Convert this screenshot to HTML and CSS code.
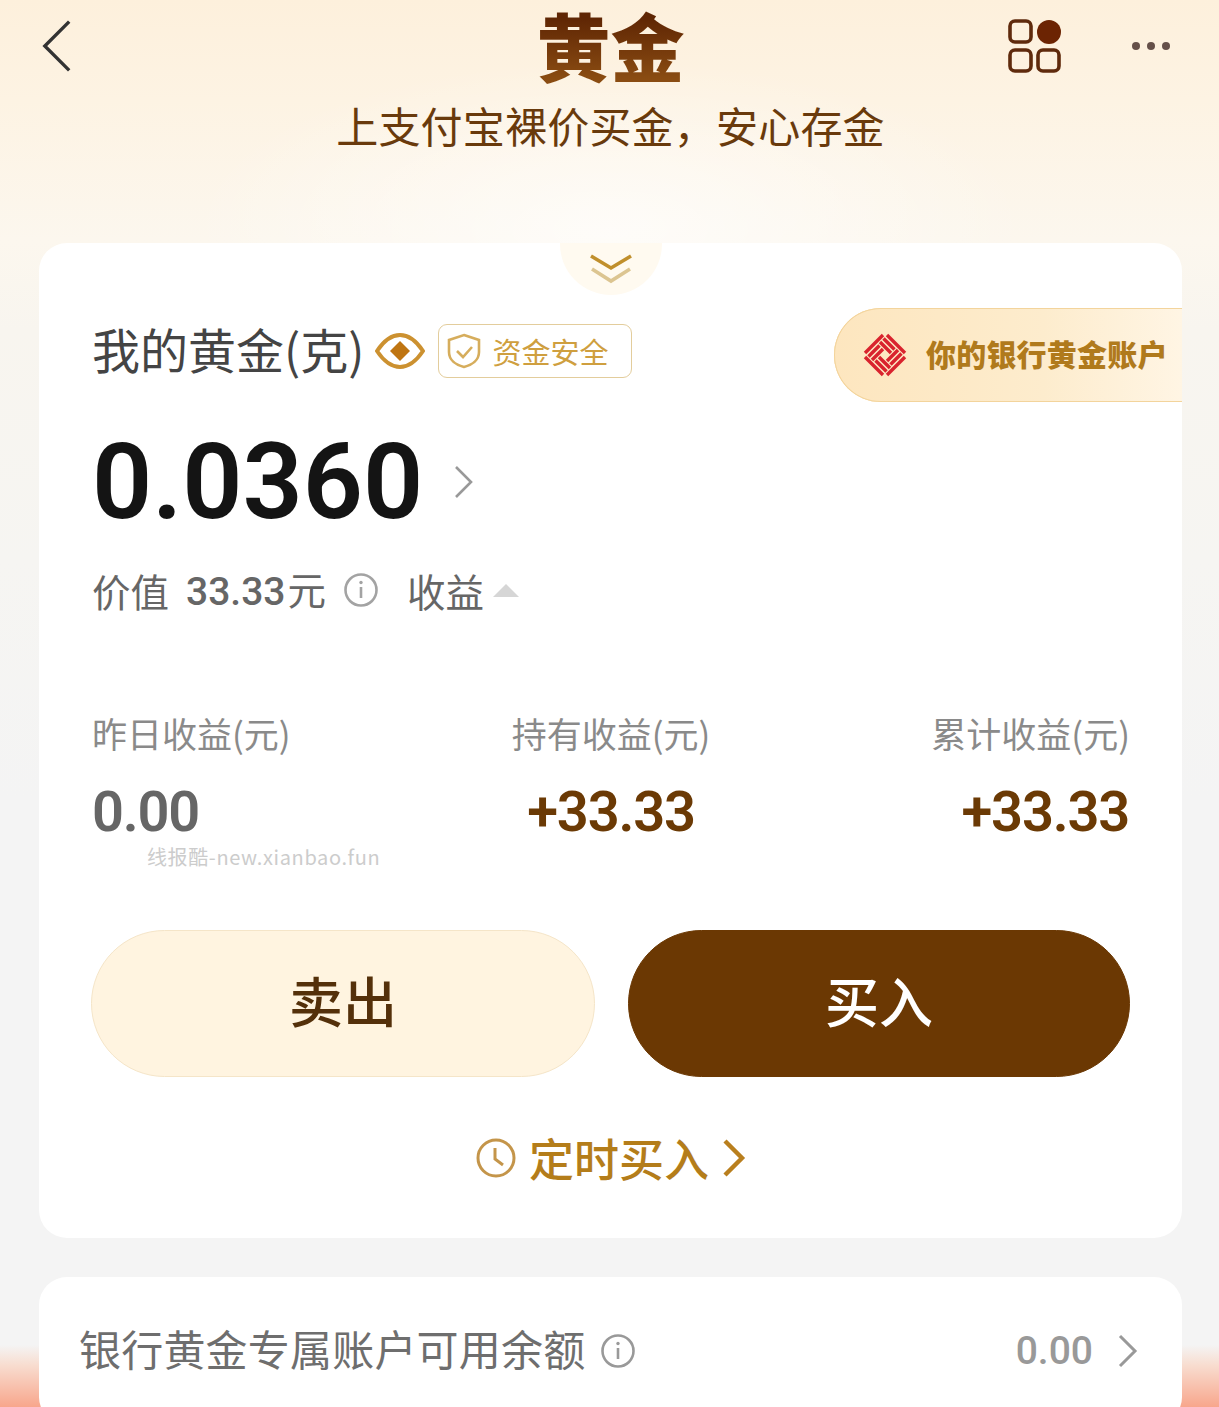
FILE: index.html
```html
<!DOCTYPE html>
<html lang="zh-CN">
<head>
  <meta charset="utf-8">
  <title>黄金</title>
  <link rel="stylesheet" href="styles.css">
</head>
<body>
  <div class="page">
    <header class="top">
      <div class="nav">
        <svg class="back" viewBox="0 0 32 56" width="30" height="54"><path d="M29 2 3 28l26 26" fill="none" stroke="#333" stroke-width="3.6"/></svg>
        <h1 class="title">黄金</h1>
        <div class="nav-right">
          <svg class="apps" viewBox="0 0 54 54" width="54" height="54">
            <rect x="2" y="2" width="21" height="21" rx="5" fill="none" stroke="#5f2a0c" stroke-width="3.6"/>
            <circle cx="41" cy="13" r="12" fill="#6c2403"/>
            <rect x="2" y="31" width="21" height="21" rx="5" fill="none" stroke="#5f2a0c" stroke-width="3.6"/>
            <rect x="30" y="31" width="21" height="21" rx="5" fill="none" stroke="#5f2a0c" stroke-width="3.6"/>
          </svg>
          <div class="more"><i></i><i></i><i></i></div>
        </div>
      </div>
      <p class="slogan">上支付宝裸价买金，安心存金</p>
    </header>

    <section class="card main">
      <div class="pull">
        <svg viewBox="0 0 44 32" width="44" height="32">
          <path d="M2 3 22 15 42 3" fill="none" stroke="#c08f2c" stroke-width="3.6"/>
          <path d="M3 16 22 28 41 16" fill="none" stroke="#dcc591" stroke-width="3.6"/>
        </svg>
      </div>
      <div class="bank">
        <svg viewBox="0 0 44 44" width="44" height="44">
          <g fill="none" stroke="#d9232e" stroke-width="3.4">
            <path d="M2 20 20 2M5.5 23.5l11-11M9 27l11-11"/>
            <path transform="rotate(90 22 22)" d="M2 20 20 2M5.5 23.5l11-11M9 27l11-11"/>
            <path transform="rotate(180 22 22)" d="M2 20 20 2M5.5 23.5l11-11M9 27l11-11"/>
            <path transform="rotate(270 22 22)" d="M2 20 20 2M5.5 23.5l11-11M9 27l11-11"/>
          </g>
        </svg>
        <span>你的银行黄金账户</span>
      </div>

      <div class="holding">
        <span class="holding-label">我的黄金(克)</span>
        <svg class="eye" viewBox="0 0 50 38" width="50" height="38">
          <path d="M2 19C10 7 17 3 25 3s15 4 23 16c-8 12-15 16-23 16S10 31 2 19Z" fill="none" stroke="#cc9130" stroke-width="4"/>
          <path d="M25 9 35 19 25 29 15 19Z" fill="#bf7512"/>
        </svg>
        <span class="safe">
          <svg viewBox="0 0 34 36" width="34" height="36">
            <path d="M17 2 32 7v12c0 8-7 13-15 15C9 32 2 27 2 19V7Z" fill="none" stroke="#d6ad5c" stroke-width="2.6"/>
            <path d="M10 18l6 6 9-10" fill="none" stroke="#d6ad5c" stroke-width="2.6"/>
          </svg>
          资金安全
        </span>
      </div>

      <div class="amount">
        <span>0.0360</span>
        <svg viewBox="0 0 20 34" width="20" height="34"><path d="M2 2 17 17 2 32" fill="none" stroke="#999" stroke-width="2.6"/></svg>
      </div>

      <div class="worth">
        <span>价值</span>
        <span class="worth-num"><b>33.33</b>元</span>
        <svg class="info" viewBox="0 0 34 34" width="34" height="34">
          <circle cx="17" cy="17" r="15.5" fill="none" stroke="#a3a3a3" stroke-width="2.6"/>
          <path d="M17 14v11" stroke="#a3a3a3" stroke-width="2.6"/>
          <circle cx="17" cy="9.5" r="1.7" fill="#a3a3a3"/>
        </svg>
        <span class="earn">收益</span>
        <i class="tri"></i>
      </div>

      <div class="stats">
        <div class="stat">
          <span class="stat-label">昨日收益(元)</span>
          <b class="stat-num grey">0.00</b>
          <span class="mark">线报酷-new.xianbao.fun</span>
        </div>
        <div class="stat mid">
          <span class="stat-label">持有收益(元)</span>
          <b class="stat-num">+33.33</b>
        </div>
        <div class="stat end">
          <span class="stat-label">累计收益(元)</span>
          <b class="stat-num">+33.33</b>
        </div>
      </div>

      <div class="actions">
        <button class="btn sell">卖出</button>
        <button class="btn buy">买入</button>
      </div>

      <div class="plan">
        <svg viewBox="0 0 40 40" width="40" height="40">
          <circle cx="20" cy="20" r="18" fill="none" stroke="#c4954a" stroke-width="3"/>
          <path d="M19 10v11l8 6" fill="none" stroke="#c4954a" stroke-width="3"/>
        </svg>
        <span>定时买入</span>
        <svg viewBox="0 0 24 38" width="24" height="38"><path d="M3 2 20 19 3 36" fill="none" stroke="#b97f1e" stroke-width="4.4"/></svg>
      </div>
    </section>

    <section class="card balance">
      <div class="balance-left">
        <span>银行黄金专属账户可用余额</span>
        <svg class="info" viewBox="0 0 34 34" width="34" height="34">
          <circle cx="17" cy="17" r="15.5" fill="none" stroke="#999" stroke-width="2.6"/>
          <path d="M17 14v11" stroke="#999" stroke-width="2.6"/>
          <circle cx="17" cy="9.5" r="1.7" fill="#999"/>
        </svg>
      </div>
      <div class="balance-right">
        <b>0.00</b>
        <svg viewBox="0 0 20 34" width="20" height="34"><path d="M2 2 17 17 2 32" fill="none" stroke="#999" stroke-width="3"/></svg>
      </div>
    </section>
  </div>
</body>
</html>
```

FILE: styles.css
```css
* {
  box-sizing: border-box;
}

html, body {
  margin: 0;
  height: 100%;
  overflow: hidden;
}

body {
  font-family: "Noto Sans CJK SC", "Noto Sans", sans-serif;
}

.page {
  height: 1407px;
  padding: 0 37px 0 39px;
  overflow: hidden;
  background:
    radial-gradient(ellipse 420px 170px at 610px 230px, rgba(255, 255, 255, .65), rgba(255, 255, 255, 0)),
    linear-gradient(180deg, #fdf0dc 0, #fdf3e3 100px, #fcf7ee 240px, #f8f5ef 330px, #f6f5f2 560px, #f4f4f4 800px, #f4f4f4 1345px, #f8ddd0 1365px, #f8a68c 1407px);
}

/* top */
.top {
  height: 243px;
}

.nav {
  position: relative;
  display: flex;
  justify-content: center;
  height: 92px;
}

.back {
  position: absolute;
  left: 3px;
  top: 19px;
}

.title {
  margin: 0;
  height: 88px;
  font-size: 74px;
  line-height: 88px;
  font-weight: 900;
  background: linear-gradient(180deg, #5f2604 20%, #8a4c12 90%);
  -webkit-background-clip: text;
  background-clip: text;
  color: transparent;
}

.nav-right {
  position: absolute;
  right: 12px;
  top: 19px;
  display: flex;
  align-items: center;
  gap: 70px;
}

.more {
  display: flex;
  gap: 7px;
}

.more i {
  width: 8px;
  height: 8px;
  border-radius: 50%;
  background: #655049;
}

.slogan {
  margin: 3px 0 0;
  text-align: center;
  font-size: 42px;
  line-height: 60px;
  letter-spacing: .2px;
  color: #693a0c;
}

/* cards */
.card {
  background: #fff;
  border-radius: 28px;
}

.main {
  position: relative;
  height: 995px;
  padding: 0 52px 0 53px;
}

.pull {
  position: absolute;
  left: 521px;
  top: 0;
  width: 102px;
  height: 52px;
  display: flex;
  justify-content: center;
  padding-top: 10px;
  background: #fffaf0;
  border-radius: 0 0 51px 51px;
}

.pull svg {
  height: 32px;
}

.bank {
  position: absolute;
  right: 0;
  top: 65px;
  width: 348px;
  height: 94px;
  display: flex;
  align-items: center;
  gap: 19px;
  padding-left: 29px;
  border-radius: 47px 0 0 47px;
  background: linear-gradient(90deg, #fde6bf 0, #fdeccd 60%, #fff5e4 100%);
  box-shadow: inset 0 1px 0 #f3d49c, inset 0 -1px 0 #f3d49c, inset 1px 0 0 #f3d49c;
  color: #b07a1c;
  font-size: 30px;
  font-weight: 900;
  line-height: 1;
  white-space: nowrap;
}

.bank span {
  margin-top: -4px;
  letter-spacing: .2px;
}

.holding {
  display: flex;
  align-items: center;
  padding-top: 81px;
  height: 135px;
}

.holding-label {
  margin-top: -6px;
  font-size: 48px;
  line-height: 54px;
  color: #444;
}

.eye {
  margin-left: 11px;
}

.safe {
  display: flex;
  align-items: center;
  gap: 11px;
  width: 194px;
  height: 54px;
  margin-left: 13px;
  padding-left: 8px;
  border: 1px solid #e3cd9c;
  border-radius: 9px;
  font-size: 29px;
  line-height: 1;
  color: #cf9f3f;
}

.amount {
  display: flex;
  align-items: center;
  gap: 31px;
  height: 120px;
  margin-top: 44px;
}

.amount span {
  font-family: Roboto, sans-serif;
  font-weight: 600;
  font-size: 105.5px;
  line-height: 120px;
  color: #141414;
}

.worth {
  display: flex;
  align-items: center;
  height: 50px;
  margin-top: 23px;
  font-size: 38.5px;
  line-height: 50px;
  color: #666;
}

.worth-num {
  margin-left: 17px;
}

.worth-num b {
  margin-right: 2px;
  font-family: Roboto, sans-serif;
  font-size: 39px;
  font-weight: 500;
}

.info {
  margin-left: 18px;
}

.earn {
  margin-left: 29px;
}

.tri {
  width: 0;
  height: 0;
  margin-left: 9px;
  border-left: 13px solid transparent;
  border-right: 13px solid transparent;
  border-bottom: 13px solid #d6d6d6;
}

.stats {
  display: grid;
  grid-template-columns: 1fr 1fr 1fr;
  margin-top: 93px;
}

.stat {
  position: relative;
  display: flex;
  flex-direction: column;
  gap: 19px;
}

.stat.mid {
  align-items: center;
}

.stat.end {
  align-items: flex-end;
}

.stat-label {
  font-size: 35px;
  line-height: 50px;
  color: #8a8a8a;
}

.stat-num {
  font-family: Roboto, sans-serif;
  font-weight: 600;
  font-size: 56px;
  line-height: 70px;
  letter-spacing: -1.2px;
  color: #6b3a05;
}

.stat.end .stat-num {
  margin-right: 1px;
}

.stat-num.grey {
  color: #666;
}

.mark {
  position: absolute;
  left: 55px;
  top: 137px;
  font-size: 20px;
  line-height: 24px;
  letter-spacing: .62px;
  color: #ccc;
  white-space: nowrap;
}

.actions {
  display: flex;
  gap: 33px;
  margin: 83px 0 0 -1px;
}

.btn {
  width: 504px;
  height: 147px;
  padding: 0 0 7px;
  border: 1px solid #f5e5c8;
  border-radius: 74px;
  font-family: inherit;
  font-size: 54px;
  font-weight: 500;
  line-height: 1;
  background: #fff4e0;
  color: #54300a;
}

.btn.buy {
  width: 502px;
  border-color: #6b3803;
  background: #6b3803;
  color: #fff;
}

.plan {
  display: flex;
  justify-content: center;
  align-items: center;
  gap: 13px;
  margin-top: 51px;
  font-size: 45px;
  font-weight: 500;
  line-height: 60px;
  color: #b47d1a;
}

.balance {
  display: flex;
  justify-content: space-between;
  align-items: center;
  height: 148px;
  margin-top: 39px;
  padding: 0 44px 0 40px;
}

.balance-left {
  display: flex;
  align-items: center;
  font-size: 42px;
  color: #6e6e6e;
}

.balance-left span {
  margin-top: -8px;
  letter-spacing: .2px;
}

.balance-left .info {
  margin-left: 16px;
}

.balance-right {
  display: flex;
  align-items: center;
  gap: 25px;
}

.balance-right b {
  font-family: Roboto, sans-serif;
  font-weight: 500;
  font-size: 39px;
  color: #999;
}
```
